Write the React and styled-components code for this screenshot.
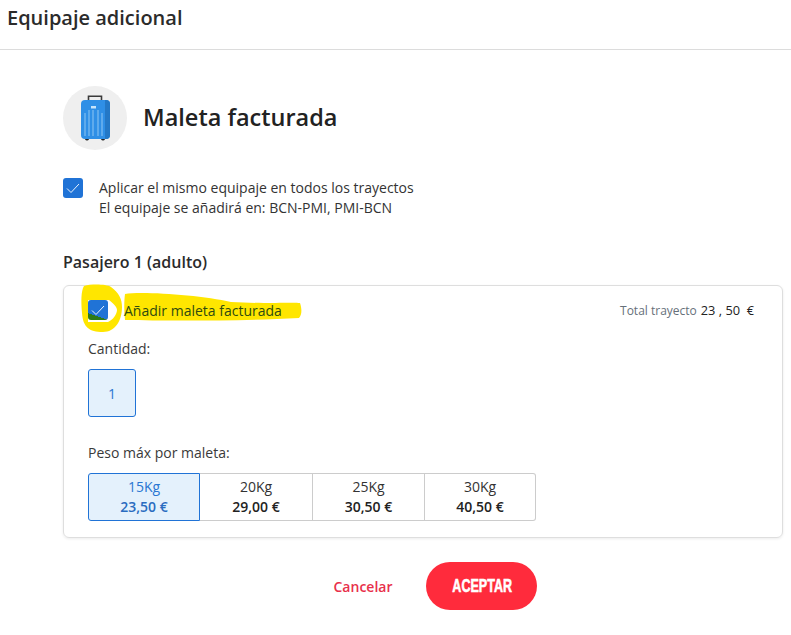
import React from 'react'
import styled, { createGlobalStyle } from 'styled-components'

const GlobalStyle = createGlobalStyle`
    html, body {
        margin: 0;
        padding: 0;
        background: #fff;
        overflow: hidden;
    }
    body {
        font-family: "Open Sans", "Noto Sans", sans-serif;
        color: #2b2b2b;
    }
`

const Page = styled.div`
    width: 791px;
    height: 635px;
    overflow: hidden;
`

const Header = styled.header`
    height: 43px;
    border-bottom: 1px solid #dcdcdc;
    padding: 6px 0 0 7px;
`

const HeaderTitle = styled.h1`
    margin: 0;
    font-size: 20px;
    line-height: 24px;
    font-weight: 600;
    color: #2b2b2b;
`

const Body = styled.main`
    padding: 36px 8px 0 63px;
`

const TitleRow = styled.div`
    display: flex;
    align-items: center;
    gap: 16px;
`

const IconCircle = styled.div`
    width: 64px;
    height: 64px;
    border-radius: 50%;
    background: #efefef;
    display: flex;
    align-items: center;
    justify-content: center;
`

const Title = styled.h2`
    margin: 0 0 2px;
    font-size: 23.5px;
    line-height: 32px;
    font-weight: 600;
    color: #222;
`

const ApplyRow = styled.div`
    display: flex;
    gap: 16px;
    margin-top: 28px;
`

const Box = styled.span`
    width: 20px;
    height: 20px;
    flex: none;
    border-radius: 3px;
    background: ${p => (p.$marked ? 'linear-gradient(199deg, #2073d6 74%, #2e7a18 74.5%)' : '#2073d6')};
    display: flex;
    align-items: center;
    justify-content: center;
`

const ApplyText = styled.div`
    font-size: 14px;
    line-height: 20px;
    color: #333;
`

const Passenger = styled.h3`
    margin: 34px 0 0;
    font-size: 16px;
    line-height: 20px;
    font-weight: 600;
    color: #2b2b2b;
`

const Card = styled.section`
    position: relative;
    margin-top: 13px;
    height: 253px;
    box-sizing: border-box;
    border: 1px solid #dedede;
    border-radius: 6px;
    box-shadow: 0 1px 3px rgba(0, 0, 0, 0.08);
    padding: 14px 24px 0;
`

const Highlight = styled.svg`
    position: absolute;
    left: 17px;
    top: -1px;
    overflow: visible;
    pointer-events: none;
`

const CardTop = styled.div`
    position: relative;
    display: flex;
    align-items: center;
    justify-content: space-between;
    height: 20px;
`

const AddLabel = styled.label`
    display: flex;
    align-items: center;
    gap: 16px;
    font-size: 14px;
    color: #2e4a10;
`

const Total = styled.div`
    display: flex;
    align-items: baseline;
    gap: 4px;
    padding-right: 4px;
    font-size: 12px;
    color: #66707a;
`

const TotalPrice = styled.span`
    font-size: 12.8px;
    font-weight: 500;
    color: #222;
    white-space: pre;
`

const Label = styled.div`
    margin-top: ${p => p.$top}px;
    font-size: 14px;
    line-height: 20px;
    color: #3a3a3a;
`

const QtyButton = styled.div`
    width: 48px;
    height: 48px;
    box-sizing: border-box;
    margin-top: 10px;
    border: 1px solid #2073d6;
    border-radius: 3px;
    background: #e4f1fc;
    color: #2a76d2;
    font-size: 14px;
    display: flex;
    align-items: center;
    justify-content: center;
`

const Weights = styled.div`
    display: flex;
    margin-top: 10px;
`

const Weight = styled.div`
    width: ${p => p.$width}px;
    height: 48px;
    box-sizing: border-box;
    border: 1px solid ${p => (p.$active ? '#2073d6' : '#cccccc')};
    border-left-width: ${p => (p.$active ? 1 : 0)}px;
    border-radius: ${p => (p.$active ? '3px 0 0 3px' : p.$last ? '0 3px 3px 0' : '0')};
    background: ${p => (p.$active ? '#e4f1fc' : '#fff')};
    color: ${p => (p.$active ? '#2a76d2' : '#333')};
    display: flex;
    flex-direction: column;
    align-items: center;
    justify-content: center;
    font-size: 14px;
    line-height: 20px;
`

const Price = styled.strong`
    font-weight: 600;
    color: ${p => (p.$active ? '#2a6cc0' : '#222')};
`

const Actions = styled.div`
    display: flex;
    align-items: center;
    justify-content: center;
    gap: 34px;
    margin-top: 24px;
    padding-left: 25px;
`

const Cancel = styled.button`
    border: 0;
    background: none;
    padding: 0;
    font-family: inherit;
    font-size: 14px;
    font-weight: 600;
    color: #e8304a;
`

const Accept = styled.button`
    width: 111px;
    height: 48px;
    padding: 0;
    border: 0;
    border-radius: 24px;
    background: #ff2b3c;
    color: #fff;
    font-family: "Liberation Sans", Arial, sans-serif;
    font-size: 19px;
    font-weight: 700;
    display: flex;
    align-items: center;
    justify-content: center;
`

const AcceptText = styled.span`
    display: inline-block;
    transform: scaleX(0.66);
    -webkit-text-stroke: 0.6px #fff;
`

const Check = () => (
    <svg width="14" height="11" viewBox="0 0 14 11" fill="none">
        <path d="M1 5.5 L5 9.5 L13 1" stroke="#eaf3ff" strokeWidth="1" />
    </svg>
)

const Suitcase = () => (
    <svg width="30" height="46" viewBox="0 0 30 46">
        <path d="M8.5 6V1.2h13V6" fill="none" stroke="#3a3a3a" strokeWidth="1.6" />
        <rect x="5" y="42" width="4" height="3.5" rx="1.7" fill="#222" />
        <rect x="21" y="42" width="4" height="3.5" rx="1.7" fill="#222" />
        <rect x="1" y="5" width="29" height="39" rx="4" fill="#2f8fe6" />
        <path d="M25 5h1a4 4 0 0 1 4 4v31a4 4 0 0 1-4 4h-1z" fill="#2478c6" />
        <rect x="11" y="11" width="5" height="2.5" fill="#c7e4fa" />
        <path d="M5 18v23M9 15v26M13 15v26M18 15v26M22 18v23" stroke="#8fc6f3" strokeWidth="1" />
    </svg>
)

const weights = [
    { kg: '15Kg', price: '23,50 €', width: 112 },
    { kg: '20Kg', price: '29,00 €', width: 113 },
    { kg: '25Kg', price: '30,50 €', width: 112 },
    { kg: '30Kg', price: '40,50 €', width: 111 },
]

const App = () => (
    <Page>
        <GlobalStyle />
        <Header>
            <HeaderTitle>Equipaje adicional</HeaderTitle>
        </Header>
        <Body>
            <TitleRow>
                <IconCircle>
                    <Suitcase />
                </IconCircle>
                <Title>Maleta facturada</Title>
            </TitleRow>
            <ApplyRow>
                <Box><Check /></Box>
                <ApplyText>
                    Aplicar el mismo equipaje en todos los trayectos<br />
                    El equipaje se añadirá en: BCN-PMI, PMI-BCN
                </ApplyText>
            </ApplyRow>
            <Passenger>Pasajero 1 (adulto)</Passenger>
            <Card>
                <Highlight width="225" height="50" viewBox="0 0 225 50">
                    <path
                        fillRule="evenodd"
                        fill="#ffe600"
                        d="M3 1 C10 -1 25 -1 30 2 C38 8 41 14 41 22 C41 36 34 47 22 47 C8 47 2 42 1 28 C0 16 0 6 3 1 Z M7 15 L28 15 C32 18 36 22 36 25 C36 29 32 35 27 37 L7 37 Z"
                    />
                    <path
                        fill="#ffe600"
                        d="M44 9 C60 6 120 10 150 17 C180 19 212 17 219 18 C221 24 221 30 218 33 C160 36 90 36 44 35 C43 26 43 16 44 9 Z"
                    />
                </Highlight>
                <CardTop>
                    <AddLabel>
                        <Box $marked><Check /></Box>
                        Añadir maleta facturada
                    </AddLabel>
                    <Total>
                        Total trayecto <TotalPrice>{'23 , 50  €'}</TotalPrice>
                    </Total>
                </CardTop>
                <Label $top={19}>Cantidad:</Label>
                <QtyButton>1</QtyButton>
                <Label $top={26}>Peso máx por maleta:</Label>
                <Weights>
                    {weights.map((w, i) => (
                        <Weight key={w.kg} $width={w.width} $active={i === 0} $last={i === 3}>
                            {w.kg}
                            <Price $active={i === 0}>{w.price}</Price>
                        </Weight>
                    ))}
                </Weights>
            </Card>
            <Actions>
                <Cancel>Cancelar</Cancel>
                <Accept><AcceptText>ACEPTAR</AcceptText></Accept>
            </Actions>
        </Body>
    </Page>
)

export default App
